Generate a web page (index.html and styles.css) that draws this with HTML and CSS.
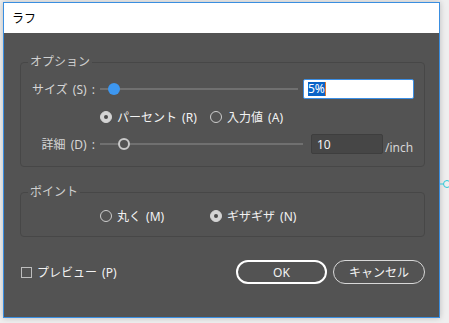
FILE: index.html
```html
<!DOCTYPE html>
<html lang="ja">
<head>
<meta charset="utf-8">
<title>ラフ</title>
<link rel="stylesheet" href="styles.css">
</head>
<body>
<div class="win">
  <div class="titlebar">ラフ</div>
  <div class="content">
    <fieldset class="group">
      <legend class="legend">オプション</legend>
      <div class="row">
        <span class="label">サイズ (S) :</span>
        <div class="slider slider-size"><span class="thumb thumb-blue"></span></div>
        <div class="input input-size"><span class="sel">5%</span><span class="caret"></span></div>
      </div>
      <div class="row row-radios">
        <span class="radio on"></span><span class="opt">パーセント (R)</span>
        <span class="radio radio-second"></span><span class="opt">入力値 (A)</span>
      </div>
      <div class="row row-detail">
        <span class="label">詳細 (D) :</span>
        <div class="slider slider-detail"><span class="thumb thumb-hollow"></span></div>
        <div class="input input-detail">10</div>
        <span class="unit">/inch</span>
      </div>
    </fieldset>
    <fieldset class="group group-point">
      <legend class="legend">ポイント</legend>
      <div class="row row-radios">
        <span class="radio"></span><span class="opt">丸く (M)</span>
        <span class="radio on radio-second"></span><span class="opt">ギザギザ (N)</span>
      </div>
    </fieldset>
    <div class="footer">
      <span class="checkbox"></span><span class="opt">プレビュー (P)</span>
      <div class="buttons">
        <button class="btn btn-ok">OK</button>
        <button class="btn btn-cancel">キャンセル</button>
      </div>
    </div>
  </div>
</div>
<svg class="cyan-mark" width="10" height="10" viewBox="0 0 10 10"><line x1="0" y1="5" x2="3" y2="5" stroke="#2cc7d9" stroke-width="1"/><circle cx="7" cy="5" r="3.5" fill="none" stroke="#2cc7d9" stroke-width="1"/></svg>
</body>
</html>
```

FILE: styles.css
```css
html, body {
  margin: 0;
  padding: 0;
}
body {
  background: #efefef;
  font-family: "Noto Sans", "Noto Sans CJK JP", sans-serif;
  font-size: 12px;
  position: relative;
  width: 449px;
  height: 323px;
  overflow: hidden;
}
.win {
  margin: 2px 0 0 3px;
  width: 437px;
  height: 316px;
  box-sizing: border-box;
  border: 1px solid #3a8ee0;
  background: #535353;
  box-shadow: 0 0 6px rgba(0, 0, 0, 0.22);
}
.titlebar {
  height: 30px;
  line-height: 30px;
  background: #ffffff;
  color: #000;
  padding-left: 8px;
  font-family: "Noto Sans CJK JP", sans-serif;
  font-size: 12px;
}
.content {
  padding: 22px 14px 0 16px;
}
.group {
  margin: 0;
  padding: 10px 0 12px 0;
  border: 1px solid #474747;
  border-radius: 4px;
  min-width: 0;
}
.legend {
  margin-left: 7px;
  padding: 0 2px;
  line-height: 14px;
  color: #cfcfcf;
}
.row {
  display: flex;
  align-items: center;
  height: 20px;
}
.row + .row {
  margin-top: 8px;
}
.row-detail {
  margin-top: 7px !important;
}
.label {
  width: 74px;
  text-align: right;
  color: #d6d6d6;
  white-space: nowrap;
  word-spacing: 2px;
}
.slider {
  height: 12px;
  margin-left: 5px;
  display: flex;
  align-items: center;
  background: linear-gradient(#707070, #707070) center / 100% 2px no-repeat;
}
.slider-size {
  width: 198px;
}
.slider-detail {
  width: 203px;
}
.thumb {
  width: 12px;
  height: 12px;
  border-radius: 50%;
  box-sizing: border-box;
}
.thumb-blue {
  margin-left: 8px;
  background: #3d97f0;
}
.thumb-hollow {
  margin-left: 18px;
  background: #535353;
  border: 2px solid #c9c9c9;
}
.input {
  height: 20px;
  box-sizing: border-box;
  display: flex;
  align-items: center;
}
.input-size {
  width: 111px;
  margin-left: 5px;
  background: #ffffff;
  border: 1px solid #3b8ee4;
  border-radius: 2px;
  padding-left: 4px;
}
.sel {
  background: #0a63c7;
  color: #fff;
  line-height: 14px;
}
.caret {
  width: 1px;
  height: 14px;
  background: #e07a2e;
}
.input-detail {
  width: 72px;
  margin-left: 8px;
  background: #464646;
  border: 1px solid #3e3e3e;
  border-radius: 2px;
  padding-left: 5px;
  color: #f4f4f4;
}
.unit {
  margin-left: 2px;
  color: #d6d6d6;
  padding-top: 6px;
}
.row-radios {
  padding-left: 79px;
}
.radio {
  width: 12px;
  height: 12px;
  box-sizing: border-box;
  border-radius: 50%;
  border: 1px solid #cdcdcd;
  display: flex;
  align-items: center;
  justify-content: center;
}
.radio.on {
  background: #d4d4d4;
  border-color: #d4d4d4;
}
.radio.on::after {
  content: "";
  width: 4px;
  height: 4px;
  border-radius: 50%;
  background: #4a4a4a;
}
.radio-second {
  margin-left: 0;
}
.opt {
  color: #f2f2f2;
  margin-left: 5px;
  white-space: nowrap;
  word-spacing: 2px;
}
.row-radios .opt:nth-child(2) {
  width: 93px;
}
.group-point {
  margin-top: 18px;
  padding: 7px 0 10px 0;
}
.footer {
  margin-top: 23px;
  display: flex;
  align-items: center;
  height: 24px;
}
.checkbox {
  width: 11px;
  height: 11px;
  box-sizing: border-box;
  border: 1px solid #bdbdbd;
  margin-left: 1px;
}
.buttons {
  margin-left: auto;
  display: flex;
  gap: 6px;
}
.btn {
  height: 24px;
  border-radius: 12px;
  background: transparent;
  color: #f2f2f2;
  font-family: "Noto Sans", "Noto Sans CJK JP", sans-serif;
  font-size: 12px;
  padding: 0;
  box-sizing: border-box;
}
.btn-ok {
  width: 91px;
  border: 2px solid #ffffff;
}
.btn-cancel {
  width: 92px;
  border: 1px solid #d8d8d8;
}
.cyan-mark {
  position: absolute;
  left: 440px;
  top: 179px;
}
```
